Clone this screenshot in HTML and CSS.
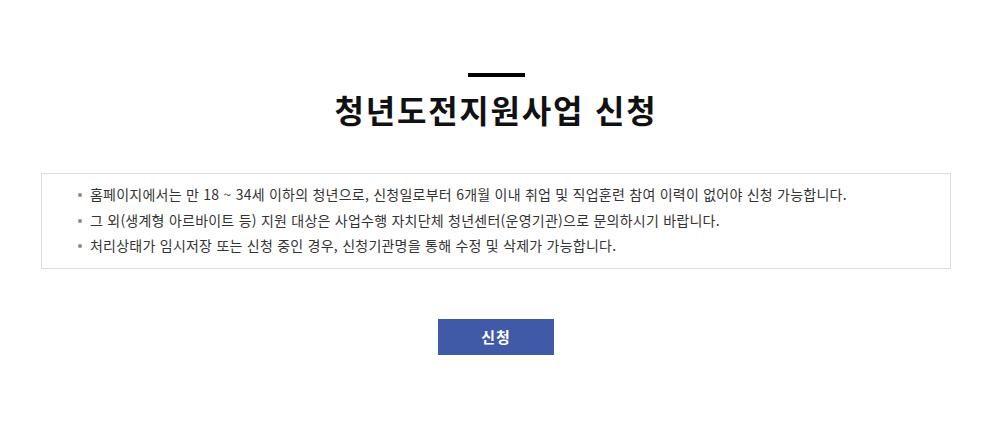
FILE: index.html
```html
<!DOCTYPE html>
<html lang="ko">
<head>
<meta charset="utf-8">
<link rel="stylesheet" href="styles.css">
</head>
<body>
<div class="wrap">
  <div class="head">
    <span class="bar"></span>
    <h1 class="title">청년도전지원사업 신청</h1>
  </div>
  <div class="notice">
    <ul class="list">
      <li>홈페이지에서는 만 18 ~ 34세 이하의 청년으로, 신청일로부터 6개월 이내 취업 및 직업훈련 참여 이력이 없어야 신청 가능합니다.</li>
      <li>그 외(생계형 아르바이트 등) 지원 대상은 사업수행 자치단체 청년센터(운영기관)으로 문의하시기 바랍니다.</li>
      <li>처리상태가 임시저장 또는 신청 중인 경우, 신청기관명을 통해 수정 및 삭제가 가능합니다.</li>
    </ul>
  </div>
  <div class="actions">
    <button class="btn">신청</button>
  </div>
</div>
</body>
</html>
```
FILE: styles.css
```css
* { box-sizing: border-box; }
html, body { margin: 0; padding: 0; background: #fff; }
body { font-family: "Noto Sans CJK KR", "Noto Sans", sans-serif; color: #222; }
.wrap { width: 910px; margin-left: 41px; padding-top: 73px; }
.head { display: flex; flex-direction: column; align-items: center; }
.bar { display: block; width: 57px; height: 4px; background: #000; }
.title { margin: 10px 0 0; font-size: 32px; font-weight: 700; line-height: 44px; color: #111; letter-spacing: 1.8px; }
.notice { margin-top: 42px; border: 1px solid #dddddd; padding: 8px 0 9px; }
.list { margin: 0; padding: 0 0 0 36px; list-style: none; }
.list li { position: relative; padding-left: 12px; font-size: 14px; line-height: 25.5px; color: #333; letter-spacing: 0.24px; }
.list li::before { content: ""; position: absolute; left: 0; top: 11px; width: 4px; height: 4px; border-radius: 50%; background: #888; }
.actions { display: flex; justify-content: center; margin-top: 50px; }
.btn { width: 116px; height: 36px; border: 0; background: #415aa8; color: #fff; font-family: inherit; font-size: 15px; font-weight: 700; letter-spacing: 1px; cursor: pointer; }
```
